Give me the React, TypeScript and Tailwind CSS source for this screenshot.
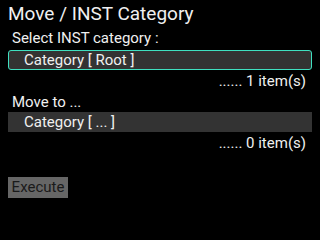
export default function App() {
  return (
    <main
      className="w-[320px] h-[240px] bg-black text-[#f0f0f0] overflow-hidden"
      style={{ fontFamily: 'Roboto, "Liberation Sans", sans-serif' }}
    >
      {/* Title */}
      <h1 className="px-2 text-[19px] leading-[27px] h-[27px]">Move / INST Category</h1>

      {/* Source category */}
      <div className="pl-3 text-[15px] leading-[23px] h-[23px]">Select INST category :</div>
      <div className="mx-2 h-[20px] rounded-[3px] border border-[#3fe0c0] bg-[#333333] pl-[15px] text-[15px] leading-[18px]">
        Category [ Root ]
      </div>
      <div className="pr-[14px] text-right text-[15px] leading-[22px] h-[22px]">...... 1 item(s)</div>

      {/* Destination */}
      <div className="pl-3 text-[15px] leading-[20px] h-[20px]">Move to ...</div>
      <div className="mx-2 h-[20px] bg-[#333333] pl-4 text-[15px] leading-[20px]">Category [ ... ]</div>
      <div className="pr-[14px] text-right text-[15px] leading-[22px] h-[22px]">...... 0 item(s)</div>

      <div className="mt-[21px] px-2">
        <button className="h-[21px] w-[60px] bg-[#666666] text-[15px] leading-[21px] text-[#1a1a1a]">
          Execute
        </button>
      </div>
    </main>
  );
}
